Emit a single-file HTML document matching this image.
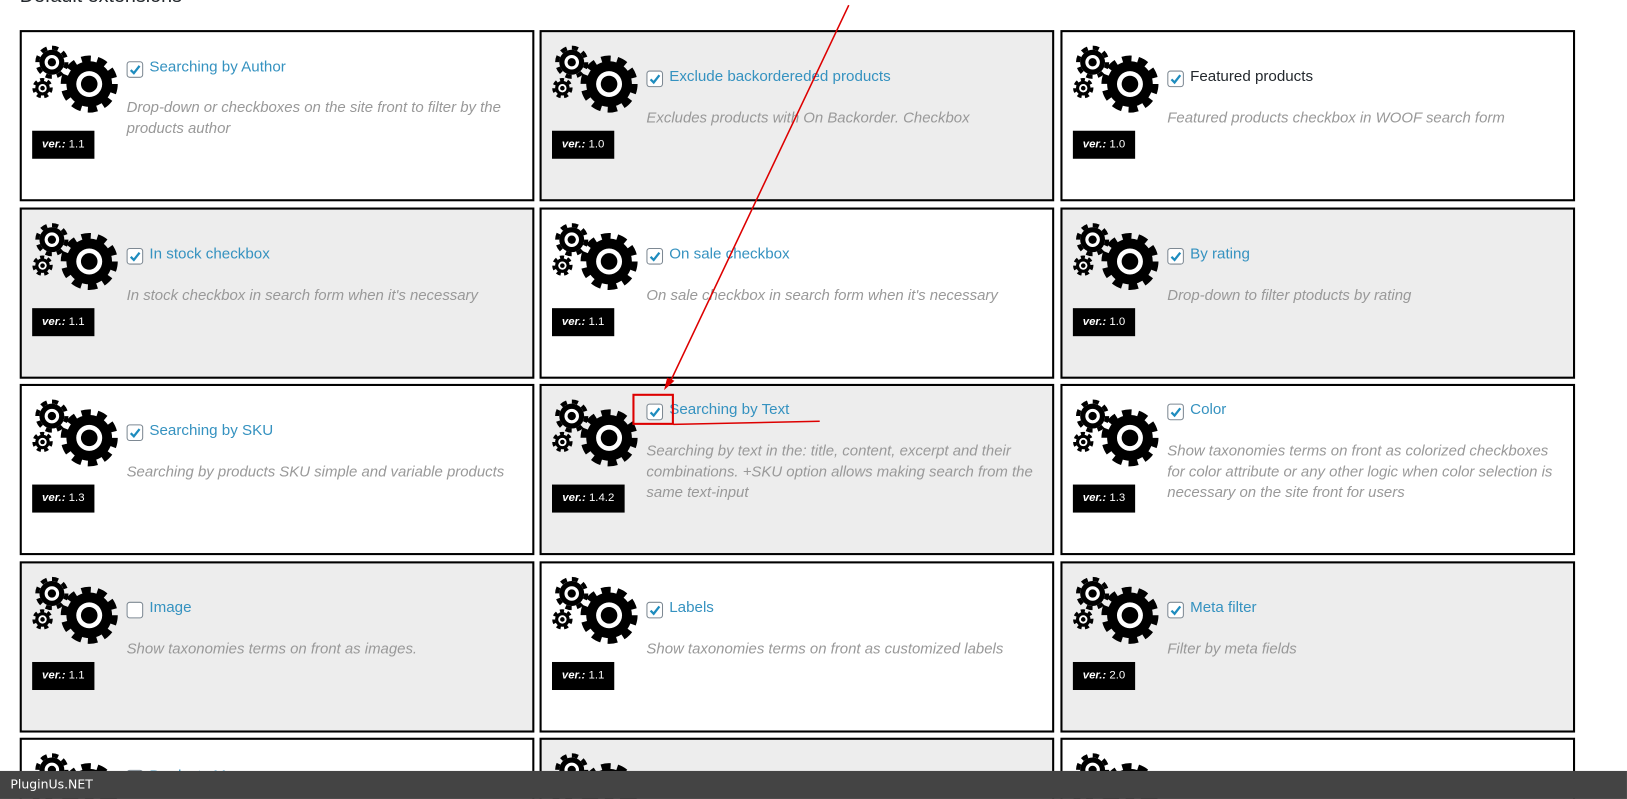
<!DOCTYPE html>
<html><head><meta charset="utf-8"><style>
body{margin:0;width:1627px;height:799px;overflow:hidden;background:#fff;font-family:"Liberation Sans",sans-serif;position:relative}
#w{position:absolute;left:0;top:0;width:1568px;height:770px;overflow:hidden;transform:scale(1.0376);transform-origin:0 0}
h2{position:absolute;left:19px;top:-14px;margin:0;font-size:19px;font-weight:normal;color:#23282d}
.card{position:absolute;width:492px;height:161px;border:2px solid #000;background:#fff}
.card.g{background:#ededed}
.gear{position:absolute;left:-2px;top:-2px}
.cb{position:absolute;left:101px;top:28px;width:14px;height:14px;border:1px solid #7e8993;border-radius:3px;background:#fff}
.cb svg{position:absolute;left:0;top:0}
.t{position:absolute;left:123px;top:26px;font-size:14.6px;color:#3592c0;white-space:nowrap}
.t.k{color:#23282d}
.d{position:absolute;left:101px;top:63px;width:380px;font-size:14.4px;line-height:20px;font-style:italic;color:#999}
.v{position:absolute;left:10px;top:95px;width:60px;height:27px;background:#000;color:#fff;font-size:11px;line-height:27px;text-align:center}
.v i{font-weight:bold}
.bar{position:absolute;left:0;top:743px;width:1568px;height:27px;background:#444;color:#fff;font-family:"DejaVu Sans",sans-serif;font-size:12px;line-height:27px;padding-left:10px;box-sizing:border-box}
</style></head><body>
<svg width="0" height="0" style="position:absolute"><defs>
<g id="gr">
<circle cx="67" cy="52" r="22" fill="#000"/>
<circle cx="67" cy="52" r="24.5" fill="none" stroke="#000" stroke-width="6" stroke-dasharray="9 6.4"/>
<circle cx="67" cy="52" r="12.5" fill="#fff"/><circle cx="67" cy="52" r="8" fill="#000"/>
<circle cx="31" cy="31" r="12" fill="#000"/>
<circle cx="31" cy="31" r="14" fill="none" stroke="#000" stroke-width="4" stroke-dasharray="6 5"/>
<circle cx="31" cy="31" r="7" fill="#fff"/><circle cx="31" cy="31" r="4" fill="#000"/>
<circle cx="22" cy="56" r="7" fill="#000"/>
<circle cx="22" cy="56" r="8.3" fill="none" stroke="#000" stroke-width="3" stroke-dasharray="4 3.3"/>
<circle cx="22" cy="56" r="4" fill="#fff"/><circle cx="22" cy="56" r="2.2" fill="#000"/>
</g>
<g id="ck"><path d="M3 7.5 L6 10.5 L11.5 3.5" fill="none" stroke="#1e8cbe" stroke-width="2.2"/></g>
</defs></svg>
<div id="w">
<h2>Default extensions</h2>

<div class="card" style="left:19px;top:29px"><svg class="gear" width="100" height="90"><use href="#gr"/></svg><div class="cb"><svg width="14" height="14"><use href="#ck"/></svg></div><div class="t">Searching by Author</div><div class="d">Drop-down or checkboxes on the site front to filter by the products author</div><div class="v"><i>ver.:</i> 1.1</div></div>
<div class="card g" style="left:520px;top:29px"><svg class="gear" width="100" height="90"><use href="#gr"/></svg><div class="cb" style="top:37px"><svg width="14" height="14"><use href="#ck"/></svg></div><div class="t" style="top:35px">Exclude backordereded products</div><div class="d" style="top:73px">Excludes products with On Backorder. Checkbox</div><div class="v"><i>ver.:</i> 1.0</div></div>
<div class="card" style="left:1022px;top:29px"><svg class="gear" width="100" height="90"><use href="#gr"/></svg><div class="cb" style="top:37px"><svg width="14" height="14"><use href="#ck"/></svg></div><div class="t k" style="top:35px">Featured products</div><div class="d" style="top:73px">Featured products checkbox in WOOF search form</div><div class="v"><i>ver.:</i> 1.0</div></div>

<div class="card g" style="left:19px;top:200px"><svg class="gear" width="100" height="90"><use href="#gr"/></svg><div class="cb" style="top:37px"><svg width="14" height="14"><use href="#ck"/></svg></div><div class="t" style="top:35px">In stock checkbox</div><div class="d" style="top:73px">In stock checkbox in search form when it's necessary</div><div class="v"><i>ver.:</i> 1.1</div></div>
<div class="card" style="left:520px;top:200px"><svg class="gear" width="100" height="90"><use href="#gr"/></svg><div class="cb" style="top:37px"><svg width="14" height="14"><use href="#ck"/></svg></div><div class="t" style="top:35px">On sale checkbox</div><div class="d" style="top:73px">On sale checkbox in search form when it's necessary</div><div class="v"><i>ver.:</i> 1.1</div></div>
<div class="card g" style="left:1022px;top:200px"><svg class="gear" width="100" height="90"><use href="#gr"/></svg><div class="cb" style="top:37px"><svg width="14" height="14"><use href="#ck"/></svg></div><div class="t" style="top:35px">By rating</div><div class="d" style="top:73px">Drop-down to filter ptoducts by rating</div><div class="v"><i>ver.:</i> 1.0</div></div>

<div class="card" style="left:19px;top:370px"><svg class="gear" width="100" height="90"><use href="#gr"/></svg><div class="cb" style="top:37px"><svg width="14" height="14"><use href="#ck"/></svg></div><div class="t" style="top:35px">Searching by SKU</div><div class="d" style="top:73px">Searching by products SKU simple and variable products</div><div class="v"><i>ver.:</i> 1.3</div></div>
<div class="card g" style="left:520px;top:370px"><svg class="gear" width="100" height="90"><use href="#gr"/></svg><div class="cb" style="top:17px"><svg width="14" height="14"><use href="#ck"/></svg></div><div class="t" style="top:15px">Searching by Text</div><div class="d" style="top:53px">Searching by text in the: title, content, excerpt and their combinations. +SKU option allows making search from the same text-input</div><div class="v" style="width:70px"><i>ver.:</i> 1.4.2</div></div>
<div class="card" style="left:1022px;top:370px"><svg class="gear" width="100" height="90"><use href="#gr"/></svg><div class="cb" style="top:17px"><svg width="14" height="14"><use href="#ck"/></svg></div><div class="t" style="top:15px">Color</div><div class="d" style="top:53px">Show taxonomies terms on front as colorized checkboxes for color attribute or any other logic when color selection is necessary on the site front for users</div><div class="v"><i>ver.:</i> 1.3</div></div>

<div class="card g" style="left:19px;top:541px"><svg class="gear" width="100" height="90"><use href="#gr"/></svg><div class="cb" style="top:37px"></div><div class="t" style="top:35px">Image</div><div class="d" style="top:73px">Show taxonomies terms on front as images.</div><div class="v"><i>ver.:</i> 1.1</div></div>
<div class="card" style="left:520px;top:541px"><svg class="gear" width="100" height="90"><use href="#gr"/></svg><div class="cb" style="top:37px"><svg width="14" height="14"><use href="#ck"/></svg></div><div class="t" style="top:35px">Labels</div><div class="d" style="top:73px">Show taxonomies terms on front as customized labels</div><div class="v"><i>ver.:</i> 1.1</div></div>
<div class="card g" style="left:1022px;top:541px"><svg class="gear" width="100" height="90"><use href="#gr"/></svg><div class="cb" style="top:37px"><svg width="14" height="14"><use href="#ck"/></svg></div><div class="t" style="top:35px">Meta filter</div><div class="d" style="top:73px">Filter by meta fields</div><div class="v"><i>ver.:</i> 2.0</div></div>

<div class="card" style="left:19px;top:711px"><svg class="gear" width="100" height="90"><use href="#gr"/></svg><div class="cb" style="top:29px"></div><div class="t" style="top:27px">Products Messenger</div></div>
<div class="card g" style="left:520px;top:711px"><svg class="gear" width="100" height="90"><use href="#gr"/></svg></div>
<div class="card" style="left:1022px;top:711px"><svg class="gear" width="100" height="90"><use href="#gr"/></svg></div>

<svg style="position:absolute;left:0;top:0" width="1568" height="770">
<line x1="818" y1="5" x2="645" y2="370" stroke="#d00" stroke-width="1.5"/>
<path d="M640 376 L643 364 L650 367 Z" fill="#d00"/>
<rect x="610.5" y="380.5" width="38" height="28" fill="none" stroke="#d00" stroke-width="2"/>
<line x1="649" y1="409" x2="790" y2="406" stroke="#d00" stroke-width="1.5"/>
</svg>
<div class="bar">PluginUs.NET</div>
</div>
</body></html>
